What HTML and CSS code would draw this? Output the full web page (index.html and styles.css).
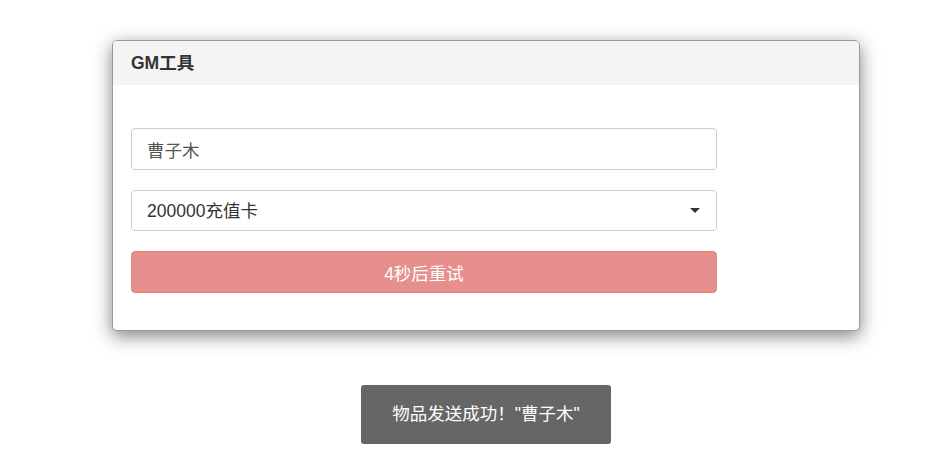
FILE: index.html
```html
<!DOCTYPE html>
<html lang="zh-CN">
<head>
    <meta charset="UTF-8">
    <meta name="viewport" content="width=device-width, initial-scale=1.0">
    <title>GM工具</title>
    <link rel="stylesheet" href="styles.css">
</head>
<body>

<div class="pagina">
    <div class="painel">
        <div class="painel-titulo">GM工具</div>
        <form class="painel-corpo">
            <input class="campo" type="text" value="曹子木">
            <div class="seletor">
                <select class="campo">
                    <option>200000充值卡</option>
                </select>
                <span class="seta"></span>
            </div>
            <button type="button" class="botao" disabled>4秒后重试</button>
        </form>
    </div>

    <div class="aviso">物品发送成功！"曹子木"</div>
</div>

</body>
</html>
```

FILE: styles.css
```css
body{
    margin: 0;
    font-family: "Liberation Sans", Arial, "Noto Sans CJK SC", sans-serif;
    background-color: #fff;
    color: #333;
}

.pagina{
    padding: 40px 66px 0 112px;
    display: flex;
    flex-direction: column;
    align-items: center;
}

.painel{
    width: 748px;
    box-sizing: border-box;
    border: 1px solid #9a9a9a;
    border-radius: 5px;
    background-color: #fff;
    box-shadow: 0 5px 18px rgba(0, 0, 0, 0.5);
    overflow: hidden;
}

.painel-titulo{
    background-color: #f4f4f4;
    height: 44px;
    line-height: 44px;
    padding-left: 18px;
    font-size: 17.5px;
    font-weight: bold;
    color: #333;
}

.painel-corpo{
    padding: 43px 18px 37px 18px;
    display: flex;
    flex-direction: column;
    gap: 20px;
}

.campo{
    width: 586px;
    height: 42px;
    box-sizing: border-box;
    padding: 0 15px;
    border: 1px solid #ccc;
    border-radius: 4px;
    font-family: inherit;
    font-size: 17.5px;
    color: #555;
    background-color: #fff;
    outline: none;
}

.seletor{
    position: relative;
    width: 586px;
}

.seletor .campo{
    height: 41px;
    color: #333;
    -webkit-appearance: none;
    appearance: none;
}

.seta{
    position: absolute;
    right: 17px;
    top: 18px;
    width: 0;
    height: 0;
    border-left: 5px solid transparent;
    border-right: 5px solid transparent;
    border-top: 5px solid #333;
}

.botao{
    width: 586px;
    height: 42px;
    border: 1px solid #e3827f;
    border-radius: 4px;
    background-color: #e68f8c;
    color: #fff;
    font-family: inherit;
    font-size: 17.5px;
}

.aviso{
    margin-top: 54px;
    width: 250px;
    height: 59px;
    line-height: 59px;
    text-align: center;
    background-color: #666;
    color: #fff;
    font-size: 17.5px;
    border-radius: 3px;
}
```
